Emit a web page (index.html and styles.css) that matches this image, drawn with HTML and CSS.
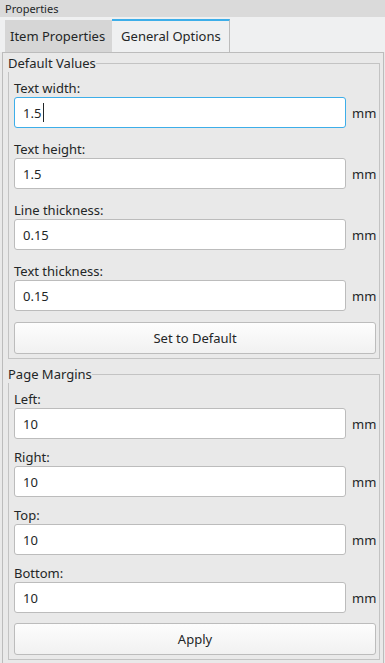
FILE: index.html
```html
<!DOCTYPE html>
<html lang="en">
<head>
  <meta charset="UTF-8">
  <meta name="viewport" content="width=device-width, initial-scale=1.0">
  <title>Properties</title>
  <link rel="stylesheet" href="styles.css">
</head>
<body>
  <div class="titlebar">Properties</div>

  <div class="tabbar">
    <div class="tab">Item Properties</div>
    <div class="tab active">General Options</div>
  </div>

  <div class="pane">
    <fieldset class="group">
      <legend>Default Values</legend>
      <div class="group-body">
        <div class="field">
          <label for="textWidth">Text width:</label>
          <div class="field-row">
            <input type="text" id="textWidth" class="input focused" value="1.5">
            <span class="caret"></span>
            <span class="unit">mm</span>
          </div>
        </div>
        <div class="field">
          <label for="textHeight">Text height:</label>
          <div class="field-row">
            <input type="text" id="textHeight" class="input" value="1.5">
            <span class="unit">mm</span>
          </div>
        </div>
        <div class="field">
          <label for="lineThickness">Line thickness:</label>
          <div class="field-row">
            <input type="text" id="lineThickness" class="input" value="0.15">
            <span class="unit">mm</span>
          </div>
        </div>
        <div class="field">
          <label for="textThickness">Text thickness:</label>
          <div class="field-row">
            <input type="text" id="textThickness" class="input" value="0.15">
            <span class="unit">mm</span>
          </div>
        </div>
        <button class="button">Set to Default</button>
      </div>
    </fieldset>

    <fieldset class="group margins">
      <legend>Page Margins</legend>
      <div class="group-body">
        <div class="field">
          <label for="marginLeft">Left:</label>
          <div class="field-row">
            <input type="text" id="marginLeft" class="input" value="10">
            <span class="unit">mm</span>
          </div>
        </div>
        <div class="field">
          <label for="marginRight">Right:</label>
          <div class="field-row">
            <input type="text" id="marginRight" class="input" value="10">
            <span class="unit">mm</span>
          </div>
        </div>
        <div class="field">
          <label for="marginTop">Top:</label>
          <div class="field-row">
            <input type="text" id="marginTop" class="input" value="10">
            <span class="unit">mm</span>
          </div>
        </div>
        <div class="field">
          <label for="marginBottom">Bottom:</label>
          <div class="field-row">
            <input type="text" id="marginBottom" class="input" value="10">
            <span class="unit">mm</span>
          </div>
        </div>
        <button class="button">Apply</button>
      </div>
    </fieldset>
  </div>
</body>
</html>
```

FILE: styles.css
```css
body {
  margin: 0;
  font-family: "Noto Sans", sans-serif;
  font-size: 13px;
  color: #232627;
  background-color: #e9e9e9;
  height: 663px;
  overflow: hidden;
}
.titlebar {
  height: 17px;
  line-height: 17px;
  padding-left: 5px;
  font-size: 11px;
  background-color: #dadada;
}
.tabbar {
  display: flex;
  align-items: flex-end;
  height: 35px;
  padding-left: 5px;
  background-color: #eff0f1;
}
.tab {
  height: 32px;
  line-height: 32px;
  padding: 0 7px 0 5px;
  background-color: #d6d6d6;
  white-space: nowrap;
}
.tab.active {
  height: 31px;
  line-height: 31px;
  padding: 0 8px 0 9px;
  background-color: #eff0f1;
  border-top: 2px solid #3daee9;
  border-right: 1px solid #bcbcbc;
}
.pane {
  margin: 0 1px 0 2px;
  height: 611px;
  border: 1px solid #bcbcbc;
  border-bottom: none;
  padding: 0 3px 0 5px;
  background-color: #e9e9e9;
}
.group {
  margin: 1px 0 0 0;
  padding: 0;
  border: 1px solid #c3c3c3;
  min-width: 0;
}
.group legend {
  padding: 0;
  margin-left: -1px;
  line-height: 18px;
}
.group.margins {
  margin-top: 6px;
}
.group-body {
  display: flex;
  flex-direction: column;
  gap: 12px;
  padding: 7px 3px 4px 5px;
}
.margins .group-body {
  gap: 9px;
}
.field {
  display: flex;
  flex-direction: column;
}
.field label {
  line-height: 18px;
}
.field-row {
  position: relative;
  display: flex;
  align-items: center;
  gap: 6px;
}
.input {
  flex: 1;
  min-width: 0;
  box-sizing: border-box;
  height: 31px;
  padding: 0 8px;
  border: 1px solid #bcbcbc;
  border-radius: 3px;
  background-color: #ffffff;
  font-family: inherit;
  font-size: 13px;
  color: #232627;
  outline: none;
}
.input:focus,
.input.focused {
  border-color: #3daee9;
}
.caret {
  position: absolute;
  left: 29px;
  top: 6px;
  width: 1px;
  height: 19px;
  background-color: #232627;
}
.unit {
  width: 24px;
}
.button {
  margin-top: -1px;
  height: 32px;
  border: 1px solid #bcbcbc;
  border-radius: 3px;
  background: linear-gradient(#fdfdfd, #f1f1f1);
  font-family: inherit;
  font-size: 13px;
  color: #232627;
}
.margins .button {
  margin-top: 1px;
}
```
